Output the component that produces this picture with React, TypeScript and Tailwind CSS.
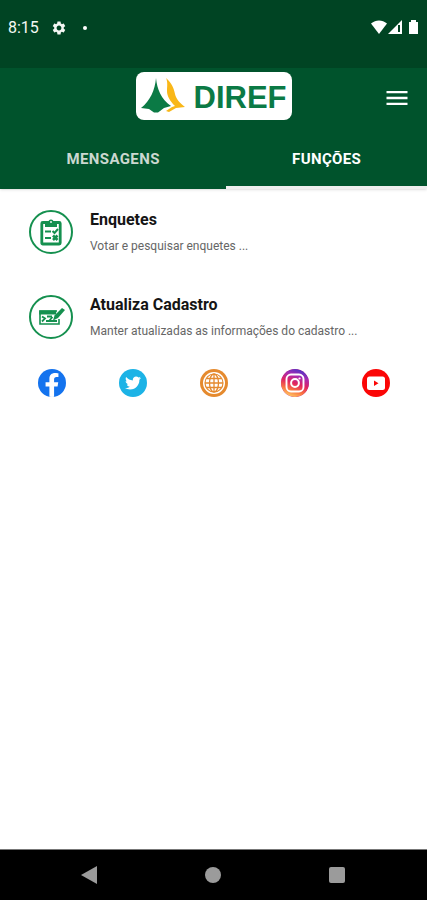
import { FaFacebookF, FaTwitter } from "react-icons/fa";
import { MdMenu, MdSettings } from "react-icons/md";

const features = [
    { title: "Enquetes", description: "Votar e pesquisar enquetes ...", icon: <ClipboardIcon /> },
    { title: "Atualiza Cadastro", description: "Manter atualizadas as informações do cadastro ...", icon: <FormIcon /> },
];

const socials = [
    { name: "Facebook", color: "bg-[#1473ee]", icon: <FaFacebookF className="mt-1 h-6 w-6" /> },
    { name: "Twitter", color: "bg-[#1cb3e6]", icon: <FaTwitter className="h-4 w-4" /> },
    { name: "Site", color: "bg-[#e58a2e]", icon: <GlobeIcon /> },
    { name: "Instagram", color: "bg-[#c72f8c]", icon: <InstagramIcon /> },
    { name: "YouTube", color: "bg-[#fb0606]", icon: <YoutubeIcon /> },
];

function ClipboardIcon() {
    return (
        <svg viewBox="0 0 24 28" className="h-7 w-6" fill="none" stroke="#15904f" aria-hidden="true">
            <rect x="2.8" y="4.500" width="18.400" height="21.500" rx="1" strokeWidth="2.800" />
            <path d="M6 9V4h3.500a2.500 2.500 0 0 1 5 0H18v5z" fill="#15904f" stroke="none" />
            <circle cx="12" cy="4" r="0.900" fill="white" stroke="none" />
            <path d="M6 13.500h6M6 20h6" strokeWidth="2.200" />
            <path d="m13.500 13 2 2 3.500-4" strokeWidth="2" />
            <path d="m14 17.500 4.500 4.500M18.500 17.500 14 22" strokeWidth="2.600" />
        </svg>
    );
}

function FormIcon() {
    return (
        <svg viewBox="0 0 28 20" className="h-5 w-7" fill="none" stroke="#15904f" aria-hidden="true">
            <path d="M20 4H3v13h19v-5" strokeWidth="1.600" />
            <path d="M2.200 5.500h17" strokeWidth="4" />
            <path d="m5 9.500 3 2L5 14.500M10 9.500h5M9 14h6M15.500 10 12 14M15 14h5" strokeWidth="1.800" />
            <path d="m16 13.500 1.500-5L25 1l3 2-7 8z" fill="#15904f" stroke="none" />
        </svg>
    );
}

function GlobeIcon() {
    return (
        <svg viewBox="0 0 28 28" className="h-7 w-7" fill="none" stroke="#e58a2e" aria-hidden="true">
            <circle cx="14" cy="14" r="11" fill="white" stroke="none" />
            <circle cx="14" cy="14" r="9" strokeWidth="1.200" />
            <ellipse cx="14" cy="14" rx="4.500" ry="9" strokeWidth="1.300" />
            <path d="M14 5v18M5 14h18M6.500 9.500h15M6.500 18.500h15" strokeWidth="1.300" />
        </svg>
    );
}

function InstagramIcon() {
    return (
        <svg viewBox="0 0 28 28" className="h-7 w-7" fill="none" aria-hidden="true">
            <defs>
                <linearGradient id="insta" x1="8" y1="28" x2="18" y2="0" gradientUnits="userSpaceOnUse">
                    <stop offset="0" stopColor="#ffd36a" />
                    <stop offset="0.250" stopColor="#fa7640" />
                    <stop offset="0.500" stopColor="#e0245f" />
                    <stop offset="0.750" stopColor="#a82bb0" />
                    <stop offset="1" stopColor="#4a35c8" />
                </linearGradient>
            </defs>
            <circle cx="14" cy="14" r="14" fill="url(#insta)" />
            <rect x="5.500" y="5.500" width="17" height="17" rx="4.500" stroke="white" strokeWidth="1.900" />
            <circle cx="14" cy="14" r="3.900" stroke="white" strokeWidth="2" />
            <circle cx="18.500" cy="9.500" r="1.100" fill="white" />
        </svg>
    );
}

function YoutubeIcon() {
    return (
        <svg viewBox="0 0 28 28" className="h-7 w-7" aria-hidden="true">
            <rect x="5" y="7.500" width="18" height="13.500" rx="2.500" fill="white" />
            <path d="m12 11.500 4.500 2.800-4.500 2.800z" fill="#fb0606" />
        </svg>
    );
}

function LogoMark() {
    return (
        <svg viewBox="0 0 46 36" className="h-9 w-[46px]" aria-hidden="true">
            <path d="M16 0c1 11 5 21 15 28l-7 2-6 4.500h-4L9 31l-8-1C10 23 15 12 16 0z" fill="#0b7a45" />
            <path d="M26 0c6 5 8 11 9 16 1 5 5 9 10 13l-9 1-7 4-3-1 6-4 3-1c-5-5-8-10-8-15 0-4 1-9-1-13z" fill="#f9b718" />
        </svg>
    );
}

function StatusBar() {
    return (
        <div className="flex h-[68px] items-start justify-between bg-[#004423] pt-4 pr-1 pl-2 text-[#f4f8f4]">
            <div className="flex h-6 items-center">
                <span className="text-base">8:15</span>
                <MdSettings className="ml-3 h-4 w-4" />
                <span className="ml-4 h-1 w-1 rounded-full bg-white" />
            </div>
            <div className="flex h-6 items-center">
                <svg viewBox="0 0 52 16" className="h-4 w-[52px]" fill="white" aria-hidden="true">
                    <path d="M0 3.500c5-4 11-4 16 0L8 14z" />
                    <path d="M17 14 31 0v14z" />
                    <path d="M27 5h2v7h-2z" fill="#004423" />
                    <path d="M38 2h2V0h5v2h2v12h-9z" />
                </svg>
            </div>
        </div>
    );
}

export default function App() {
    return (
        <div className="flex min-h-screen flex-col bg-white font-[Roboto,sans-serif]">
            <header className="bg-[#00532c] shadow-sm">
                <StatusBar />
                <div className="grid grid-cols-[1fr_auto_1fr] items-center pt-1">
                    <div className="col-start-2 flex h-12 w-[156px] items-center gap-2 rounded-lg bg-white pl-1">
                        <LogoMark />
                        <span className="pt-1 font-['Liberation_Sans',sans-serif] text-[31px] leading-8 font-bold text-[#0b7a45]">DIREF</span>
                    </div>
                    <button type="button" aria-label="Menu" className="mr-4 justify-self-end pt-1 text-white">
                        <MdMenu className="h-7 w-7" />
                    </button>
                </div>
                <div role="tablist" className="grid grid-cols-[53fr_47fr] pt-2 text-[15px] font-bold tracking-wide">
                    <button type="button" role="tab" aria-selected="false" className="h-[61px] border-b-3 border-transparent pt-1 text-[#cbd8d0]">
                        MENSAGENS
                    </button>
                    <button type="button" role="tab" aria-selected="true" className="h-[61px] border-b-3 border-[#eeeeee] pt-1 text-white">
                        FUNÇÕES
                    </button>
                </div>
            </header>

            <main className="flex-1 pt-px">
                <ul>
                    {features.map((feature) => (
                        <li key={feature.title} className="h-[85px]">
                            <button type="button" className="flex w-full items-center gap-[17px] px-[29px] pt-5 text-left">
                                <span className="flex h-11 w-11 shrink-0 items-center justify-center rounded-full border-2 border-[#15904f]">
                                    {feature.icon}
                                </span>
                                <span className="flex flex-col gap-2">
                                    <span className="text-base leading-5 font-bold text-[#151515]">{feature.title}</span>
                                    <span className="text-xs leading-4 text-[#666666]">{feature.description}</span>
                                </span>
                            </button>
                        </li>
                    ))}
                </ul>
                <nav className="grid grid-cols-5 justify-items-center px-[11px] pt-[9px]">
                    {socials.map((social) => (
                        <a
                            key={social.name}
                            href="#"
                            aria-label={social.name}
                            className={`flex h-7 w-7 items-center justify-center overflow-hidden rounded-full text-white ${social.color}`}
                        >
                            {social.icon}
                        </a>
                    ))}
                </nav>
            </main>

            <footer className="flex h-[51px] items-center justify-around border-t border-[#777777] bg-black pr-7 pl-[26px]">
                <button type="button" aria-label="Voltar">
                    <svg viewBox="0 0 18 20" className="h-5 w-[18px]" fill="#9b9b9b">
                        <path d="M17 1v18L1 10z" />
                    </svg>
                </button>
                <button type="button" aria-label="Início" className="h-4 w-4 rounded-full bg-[#9b9b9b]" />
                <button type="button" aria-label="Recentes" className="h-4 w-4 rounded-xs bg-[#9b9b9b]" />
            </footer>
        </div>
    );
}
